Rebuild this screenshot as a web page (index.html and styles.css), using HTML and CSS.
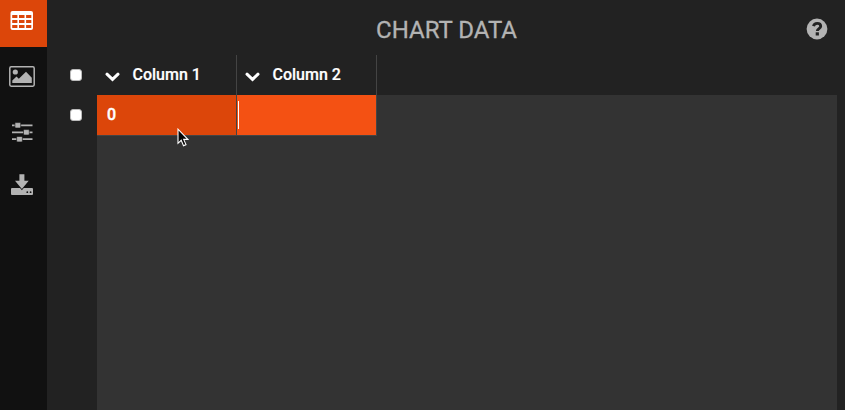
FILE: index.html
```html
<!DOCTYPE html>
<html lang="en">
<head>
<meta charset="utf-8">
<title>Chart Data</title>
<link rel="stylesheet" href="styles.css">
</head>
<body>
<div class="app">
  <nav class="sidebar">
    <a class="tool active"><svg width="47" height="47" viewBox="0 0 47 47"><rect x="10.5" y="11" width="22.5" height="19" rx="2" fill="#fff"/><g fill="#dc460a"><rect x="12.2" y="15" width="5.2" height="3"/><rect x="19" y="15" width="5.5" height="3"/><rect x="26.1" y="15" width="5.2" height="3"/><rect x="12.2" y="20" width="5.2" height="3"/><rect x="19" y="20" width="5.5" height="3"/><rect x="26.1" y="20" width="5.2" height="3"/><rect x="12.2" y="25" width="5.2" height="3"/><rect x="19" y="25" width="5.5" height="3"/><rect x="26.1" y="25" width="5.2" height="3"/></g></svg></a>
    <a class="tool"><svg width="47" height="56" viewBox="0 47 47 56"><rect x="9.8" y="66.8" width="24.4" height="19.4" rx="1.4" fill="none" stroke="#b3b3b3" stroke-width="1.5"/><circle cx="15.3" cy="72" r="2.6"/><path d="M12.3 83V80.5L16.5 76.6l2.3 2.1 7.2-7 5.8 6V83z"/></svg></a>
    <a class="tool"><svg width="47" height="56" viewBox="0 103 47 56"><path d="M12 125.3h20.5M12 132.3h20.5M12 139.2h20.5" stroke="#b3b3b3" stroke-width="1.7"/><g stroke="#111" stroke-width=".6"><rect x="14.9" y="122.6" width="5.8" height="5.4" rx="1"/><rect x="23.5" y="129.6" width="5.8" height="5.4" rx="1"/><rect x="16.6" y="136.5" width="5.8" height="5.4" rx="1"/></g></svg></a>
    <a class="tool"><svg width="47" height="56" viewBox="0 159 47 56"><path d="M12 188h20q1 0 1 1v5q0 1-1 1H12q-1 0-1-1v-5q0-1 1-1z"/><path d="M19.4 174.3h5v6.5h4.3l-6.8 8.1-6.9-8.1h4.4z" stroke="#111" stroke-width="1.6" paint-order="stroke"/><circle cx="27.3" cy="192.2" r=".9" fill="#111"/><circle cx="30.6" cy="192.2" r=".9" fill="#111"/></svg></a>
  </nav>
  <main class="panel">
    <header class="titlebar">
      <h1>CHART DATA</h1>
      <svg class="help" width="22" height="22" viewBox="0 0 22 22"><circle cx="11" cy="11" r="10.4" fill="#b3b3b3"/><path d="M7.5 8.2C8 6.1 9.3 5.4 11.2 5.4c2.2 0 3.5 1.2 3.5 2.8 0 2.4-3.4 2.4-3.4 4.9" fill="none" stroke="#222" stroke-width="2.9"/><rect x="9.7" y="14.3" width="3.2" height="3.2" fill="#222"/></svg>
    </header>
    <section class="workspace">
      <div class="checks">
        <label><i class="check"></i></label>
        <label><i class="check"></i></label>
      </div>
      <div class="sheet">
        <div class="row head">
          <div class="col"><svg class="chevron" width="15" height="10" viewBox="0 0 15 10"><path d="M2 2.2L7.5 7.4 13 2.2" fill="none" stroke="#fff" stroke-width="3" stroke-linecap="round"/></svg><span>Column 1</span></div>
          <div class="col"><svg class="chevron" width="15" height="10" viewBox="0 0 15 10"><path d="M2 2.2L7.5 7.4 13 2.2" fill="none" stroke="#fff" stroke-width="3" stroke-linecap="round"/></svg><span>Column 2</span></div>
        </div>
        <div class="body">
          <div class="row cells">
            <div class="cell selected">0</div>
            <div class="cell editing"><i class="caret"></i></div>
          </div>
        </div>
      </div>
    </section>
  </main>
  <svg class="pointer" width="12" height="19" viewBox="0 0 12 19"><path d="M1 1.2v14.1l3.2-3 2.3 5.4 2.5-1.1-2.3-5.2h4.2z" fill="#050505" stroke="#fff" stroke-width="1.1"/></svg>
</div>
</body>
</html>
```
FILE: styles.css
```css
* { box-sizing: border-box; }
body { margin: 0; background: #222; font-family: Roboto, sans-serif; overflow: hidden; }
.app { display: flex; height: 410px; position: relative; }
.sidebar { width: 47px; flex: none; background: #111; }
.tool { display: block; }
.tool svg { display: block; fill: #b3b3b3; }
.tool.active { background: #dc460a; height: 47px; }
.panel { flex: 1; display: flex; flex-direction: column; }
.titlebar { height: 55px; flex: none; display: grid; grid-template-columns: 40px 1fr 39px; padding-top: 10px; }
.titlebar h1 { grid-column: 2; margin: 0; text-align: center; font-size: 24px; font-weight: 400; line-height: 41px; color: #b3b3b3; -webkit-text-stroke: 0.3px #b3b3b3; }
.help { grid-column: 3; margin: 8px 0 0; }
.workspace { flex: 1; display: flex; padding-right: 8px; }
.checks { width: 50px; }
.checks label { display: flex; height: 40px; align-items: center; padding-left: 23px; }
.check { width: 12px; height: 12px; border: 1px solid #bbb; border-radius: 3px; background: #fff; }
.sheet { flex: 1; display: flex; flex-direction: column; }
.row { display: flex; }
.col { width: 140px; height: 40px; display: flex; align-items: center; padding-left: 7.5px; border-right: 1px solid #444; color: #fff; font-size: 16px; font-weight: 500; -webkit-text-stroke: 0.2px #fff; }
.col span { margin: -2px 0 0 13px; }
.chevron { margin-top: 3px; }
.body { flex: 1; background: #333; }
.cell { width: 140px; height: 41px; padding-left: 10px; border-right: 1px solid #444; border-bottom: 1px solid #444; color: #fff; font-size: 16px; font-weight: 500; line-height: 39px; -webkit-text-stroke: 0.4px #fff; }
.selected { background: #dc460a; }
.editing { background: #f45113; padding: 6px 0 0 1px; }
.caret { display: block; width: 1px; height: 28px; background: #fff; }
.pointer { position: absolute; left: 177px; top: 128px; }
```
